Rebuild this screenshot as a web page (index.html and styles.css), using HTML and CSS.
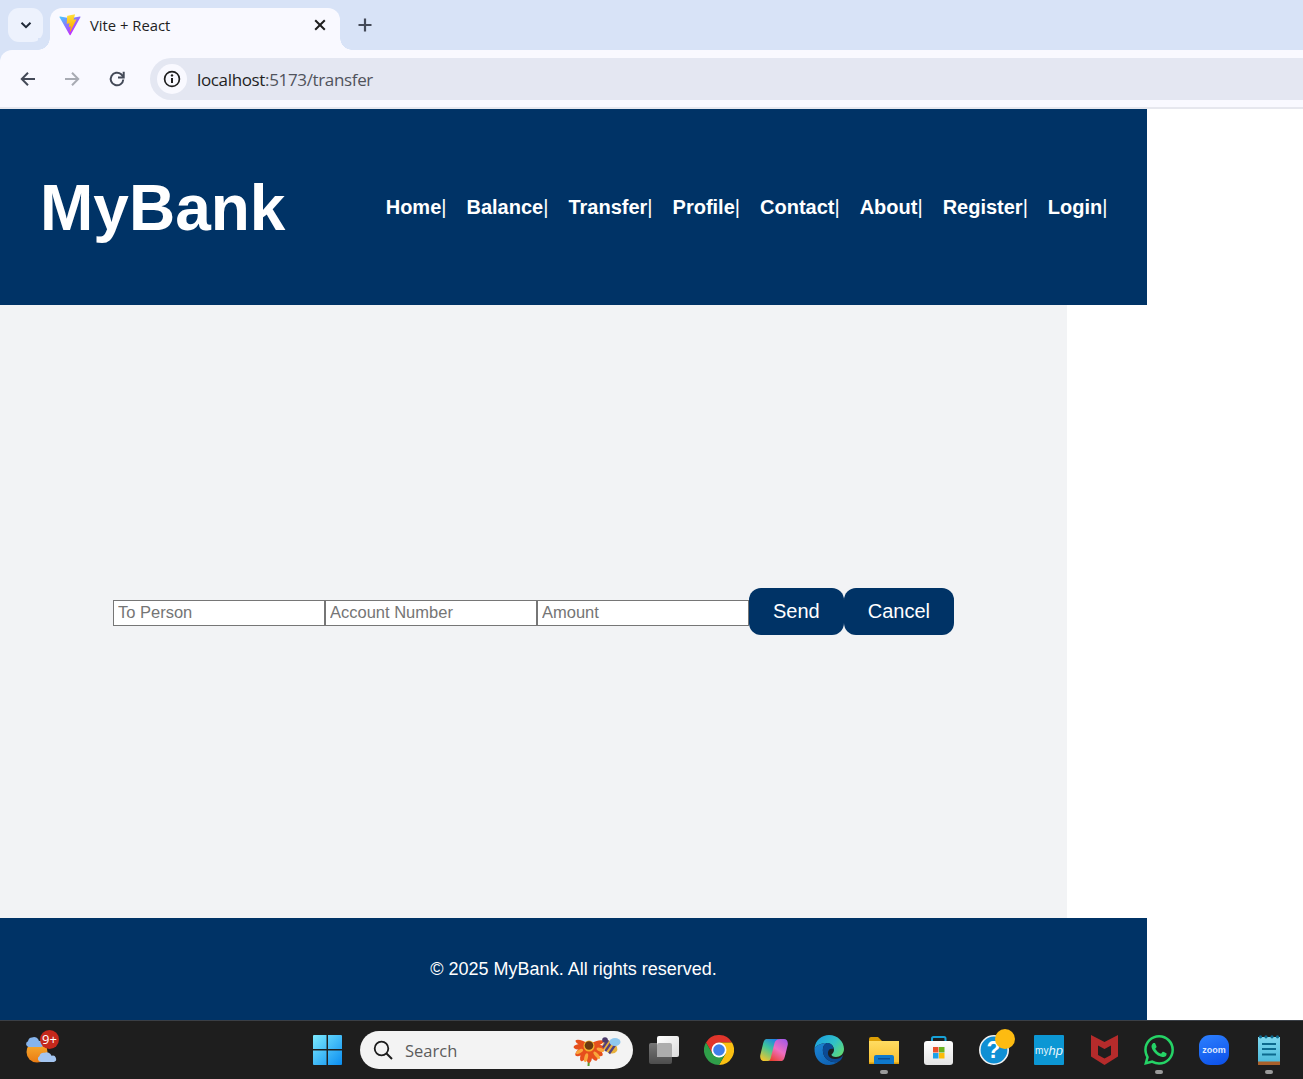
FILE: index.html
```html
<!DOCTYPE html>
<html lang="en">
<head>
<meta charset="utf-8">
<title>Vite + React</title>
<link rel="stylesheet" href="styles.css">
</head>
<body>
<div class="browser">
  <div class="tabstrip">
    <button class="tab-search" aria-label="Search tabs">
      <svg width="14" height="14" viewBox="0 0 14 14"><path d="M2.500 4.800 7 9.200l4.500-4.400" fill="none" stroke="#1f2937" stroke-width="2"/></svg>
    </button>
    <div class="tab">
      <svg class="favicon" width="22" height="22" viewBox="0 0 410 404">
        <defs>
          <linearGradient id="vg1" x1="6" y1="33" x2="235" y2="344" gradientUnits="userSpaceOnUse"><stop offset="0" stop-color="#41d1ff"/><stop offset="1" stop-color="#bd34fe"/></linearGradient>
          <linearGradient id="vg2" x1="194" y1="8" x2="236" y2="292" gradientUnits="userSpaceOnUse"><stop offset="0" stop-color="#ffea83"/><stop offset=".08" stop-color="#ffdd35"/><stop offset="1" stop-color="#ffa800"/></linearGradient>
        </defs>
        <path d="M399.641 59.525 215.643 388.545c-3.800 6.793-13.559 6.833-17.415.073L10.582 59.556c-4.200-7.366 2.100-16.288 10.447-14.795l184.195 32.923a10 10 0 0 0 3.550-.006l180.343-32.870c8.320-1.516 14.649 7.337 10.524 14.717Z" fill="url(#vg1)"/>
        <path d="M292.965 1.574 156.801 28.255a5 5 0 0 0-4.030 4.611l-8.376 141.464c-.197 3.332 2.863 5.918 6.115 5.168l37.910-8.749c3.547-.818 6.752 2.306 6.023 5.873l-11.263 55.153c-.758 3.712 2.727 6.886 6.352 5.785l23.415-7.114c3.630-1.102 7.118 2.081 6.350 5.796l-17.899 86.633c-1.120 5.419 6.088 8.374 9.094 3.728l2.008-3.103 110.954-221.428c1.858-3.707-1.346-7.935-5.418-7.150l-39.022 7.532c-3.667.707-6.787-2.708-5.752-6.296l25.469-88.291c1.036-3.594-2.095-7.012-5.766-6.293Z" fill="url(#vg2)"/>
      </svg>
      <span class="tab-title">Vite + React</span>
      <svg class="tab-close" width="12" height="12" viewBox="0 0 12 12"><path d="M1.200 1.200l9.600 9.600M10.800 1.200l-9.600 9.600" stroke="#1f1f1f" stroke-width="2"/></svg>
    </div>
    <svg class="new-tab" width="14" height="14" viewBox="0 0 14 14"><path d="M7 0.500v13M0.500 7h13" stroke="#444a58" stroke-width="2.200"/></svg>
  </div>
  <div class="toolbar">
    <svg class="nav-icon" width="18" height="18" viewBox="0 0 18 18"><path d="M16 9H3M9 2.800 2.800 9 9 15.200" fill="none" stroke="#444a58" stroke-width="2"/></svg>
    <svg class="nav-icon" width="18" height="18" viewBox="0 0 18 18"><path d="M2 9h13M9 2.800 15.200 9 9 15.200" fill="none" stroke="#a8abb3" stroke-width="2"/></svg>
    <svg class="nav-icon" width="18" height="18" viewBox="0 0 18 18"><path d="M15.300 9.500A6.300 6.300 0 1 1 13.200 4.300L15.200 6.500" fill="none" stroke="#444a58" stroke-width="2"/><path d="M15.700 1.800v5.700h-5.700" fill="none" stroke="#444a58" stroke-width="2"/></svg>
    <div class="omnibox">
      <span class="site-info">
        <svg width="18" height="18" viewBox="0 0 18 18"><circle cx="9" cy="9" r="7.400" fill="none" stroke="#1f1f1f" stroke-width="1.700"/><path d="M9 8v5" stroke="#1f1f1f" stroke-width="2"/><circle cx="9" cy="5.400" r="1.200" fill="#1f1f1f"/></svg>
      </span>
      <span class="url"><span class="url-host">localhost</span>:5173/transfer</span>
    </div>
  </div>
</div>

<header class="site-header">
  <h1 class="logo">MyBank</h1>
  <nav class="site-nav">
    <a class="nav-link" href="#">Home<span class="sep">|</span></a>
    <a class="nav-link" href="#">Balance<span class="sep">|</span></a>
    <a class="nav-link" href="#">Transfer<span class="sep">|</span></a>
    <a class="nav-link" href="#">Profile<span class="sep">|</span></a>
    <a class="nav-link" href="#">Contact<span class="sep">|</span></a>
    <a class="nav-link" href="#">About<span class="sep">|</span></a>
    <a class="nav-link" href="#">Register<span class="sep">|</span></a>
    <a class="nav-link" href="#">Login<span class="sep">|</span></a>
  </nav>
</header>

<main class="transfer">
  <form class="transfer-form">
    <input class="field" type="text" placeholder="To Person">
    <input class="field" type="text" placeholder="Account Number">
    <input class="field" type="text" placeholder="Amount">
    <button class="btn" type="button">Send</button>
    <button class="btn" type="button">Cancel</button>
  </form>
</main>

<footer class="site-footer">© 2025 MyBank. All rights reserved.</footer>

<div class="taskbar">
  <div class="widgets">
    <span class="weather">
      <svg width="34" height="34" viewBox="0 0 34 34">
        <defs><linearGradient id="sun" x1="0" y1="0" x2="0" y2="1"><stop offset="0" stop-color="#f9b233"/><stop offset="1" stop-color="#ea7b12"/></linearGradient></defs>
        <circle cx="12" cy="19" r="10.500" fill="url(#sun)"/>
        <path d="M4 14a3 3 0 0 1-1-5.800 4.500 4.500 0 0 1 4-3.700 5 5 0 0 1 7 3.500 3 3 0 0 1 2 6Z" fill="#86b4ec"/>
        <path d="M16 29a3.200 3.200 0 0 1-1.500-6 4.500 4.500 0 0 1 5-3.200 5 5 0 0 1 7 3 3.200 3.200 0 0 1 2.500 6.200Z" fill="#a4c5f0"/>
      </svg>
      <span class="badge">9+</span>
    </span>
  </div>
  <div class="slot">
    <svg width="29" height="30" viewBox="0 0 30 30" preserveAspectRatio="none">
      <defs><linearGradient id="wg" x1="0" y1="0" x2="1" y2="1"><stop offset="0" stop-color="#7ceaff"/><stop offset="1" stop-color="#0a8df0"/></linearGradient></defs>
      <path d="M0 1a1 1 0 0 1 1-1h13v14H0ZM15.500 0H29a1 1 0 0 1 1 1v13H15.500ZM0 15.500h14V30H1a1 1 0 0 1-1-1ZM15.500 15.500H30V29a1 1 0 0 1-1 1H15.500Z" fill="url(#wg)"/>
    </svg>
  </div>
  <div class="task-search">
    <svg width="20" height="20" viewBox="0 0 20 20"><circle cx="8.500" cy="8.500" r="6.800" fill="none" stroke="#1c1c1c" stroke-width="1.800"/><path d="M13.500 13.500 19 19" stroke="#1c1c1c" stroke-width="2"/></svg>
    <span class="task-search-text">Search</span>
    <svg class="search-art" width="48" height="34" viewBox="0 0 48 34">
      <path d="M16 24 15.500 33" stroke="#5b9a2e" stroke-width="2"/>
      <g fill="#e64f1c">
        <ellipse cx="16" cy="21" rx="3.500" ry="9"/>
        <ellipse cx="16" cy="21" rx="3.500" ry="9" transform="rotate(28 16 13)"/>
        <ellipse cx="16" cy="21" rx="3.500" ry="8.500" transform="rotate(-28 16 13)"/>
        <ellipse cx="16" cy="21" rx="3.500" ry="8.500" transform="rotate(55 16 13)"/>
        <ellipse cx="16" cy="21" rx="3.500" ry="8.500" transform="rotate(-55 16 13)"/>
        <ellipse cx="16" cy="21" rx="3" ry="7.500" transform="rotate(85 16 13)"/>
        <ellipse cx="16" cy="21" rx="3" ry="8.500" transform="rotate(-82 16 13)"/>
        <ellipse cx="16" cy="21" rx="2.500" ry="6.500" transform="rotate(112 16 13)"/>
        <ellipse cx="16" cy="21" rx="2.500" ry="7.500" transform="rotate(-108 16 13)"/>
      </g>
      <g fill="#f9a63c">
        <ellipse cx="16" cy="25" rx="1.800" ry="4.500" transform="rotate(14 16 13)"/>
        <ellipse cx="16" cy="25" rx="1.800" ry="4.500" transform="rotate(-40 16 13)"/>
        <ellipse cx="16" cy="25" rx="1.800" ry="4" transform="rotate(-72 16 13)"/>
        <ellipse cx="16" cy="24" rx="1.800" ry="4" transform="rotate(60 16 13)"/>
      </g>
      <circle cx="16" cy="13" r="5.500" fill="#f4b22f"/>
      <circle cx="16" cy="12.500" r="4.300" fill="#6a3a12"/>
      <g transform="rotate(35 37 14)">
        <ellipse cx="37" cy="14" rx="8" ry="5.800" fill="#e8b13c"/>
        <path d="M31.500 9.500v9M35.500 8v12M40 8.200v11.600" stroke="#54407e" stroke-width="2.300"/>
      </g>
      <ellipse cx="42" cy="9" rx="5.500" ry="4" fill="#8fc8ee"/>
      <circle cx="32" cy="7" r="2.800" fill="#4b3a6a"/>
    </svg>
  </div>
  <div class="slot slot-first">
    <svg width="31" height="28" viewBox="0 0 31 28">
      <defs>
        <linearGradient id="tv1" x1="0" y1="0" x2="0" y2="1"><stop offset="0" stop-color="#777"/><stop offset="1" stop-color="#4d4d4d"/></linearGradient>
        <linearGradient id="tv2" x1="0" y1="0" x2="1" y2="1"><stop offset="0" stop-color="#fff"/><stop offset="1" stop-color="#dcdcdc"/></linearGradient>
      </defs>
      <rect x="0" y="7" width="23" height="21" rx="2" fill="url(#tv1)"/>
      <rect x="8" y="0" width="22" height="21" rx="2" fill="url(#tv2)"/>
      <path d="M8 9a2 2 0 0 1 2-2h11a2 2 0 0 1 2 2v12H8Z" fill="#adadad"/>
    </svg>
  </div>
  <div class="slot">
    <svg width="30" height="30" viewBox="0 0 30 30">
      <path d="M2 7.500A15 15 0 0 1 28 7.500L15 7.500 8.500 18.750Z" fill="#e0352b"/>
      <path d="M28 7.500A15 15 0 0 1 15 30L21.500 18.750 15 7.500Z" fill="#fbc012"/>
      <path d="M15 30A15 15 0 0 1 2 7.500L8.500 18.750H21.500Z" fill="#2f9e49"/>
      <circle cx="15" cy="15" r="7.500" fill="#fff"/>
      <circle cx="15" cy="15" r="5.800" fill="#3f7fea"/>
    </svg>
  </div>
  <div class="slot">
    <svg width="28" height="24" viewBox="0 0 28 24">
      <defs>
        <linearGradient id="cp1" x1=".75" y1="0" x2=".2" y2="1"><stop offset="0" stop-color="#1f7fe8"/><stop offset=".45" stop-color="#3fc69a"/><stop offset="1" stop-color="#f4c52a"/></linearGradient>
        <linearGradient id="cp2" x1=".2" y1="1" x2=".8" y2="0"><stop offset="0" stop-color="#a65ae6"/><stop offset=".5" stop-color="#ef6fc0"/><stop offset="1" stop-color="#e8402f"/></linearGradient>
      </defs>
      <path d="M7 1H20C18 1 17.500 3 17 5L13.500 19C13 21 11 23 8 23H4C1 23-.3 20 .3 17L3 6C4 2 5 1 7 1Z" fill="url(#cp1)"/>
      <path d="M7 1H20C18 1 17.500 3 17 5L13.500 19C13 21 11 23 8 23H4C1 23-.3 20 .3 17L3 6C4 2 5 1 7 1Z" fill="url(#cp2)" transform="rotate(180 14 12)"/>
    </svg>
  </div>
  <div class="slot">
    <svg width="30" height="30" viewBox="0 0 30 30">
      <defs>
        <linearGradient id="ed1" x1="0" y1=".2" x2="1" y2=".8"><stop offset="0" stop-color="#1b9fe0"/><stop offset=".55" stop-color="#30c0c8"/><stop offset="1" stop-color="#62da72"/></linearGradient>
        <linearGradient id="ed2" x1="0" y1="0" x2=".7" y2="1"><stop offset="0" stop-color="#1c86d4"/><stop offset="1" stop-color="#0f62b4"/></linearGradient>
      </defs>
      <path d="M.5 13C1.500 5 8 0 15 0C24 0 30 7 30 14C30 19 26 22 22 22C19 22 17.500 21 17.500 19.500C18.500 18.500 20 17.500 20 15C20 11 17 8 13 8C8 8 3 10 .5 13Z" fill="url(#ed1)"/>
      <path d="M.5 13C3 10 8 8 13 8C10 9 8.500 12 9 17C10 24 16 28 24 27C21 29 18 30 15 30C6 30 0 23 .5 13Z" fill="url(#ed2)"/>
      <path d="M13 8C10 9 8.500 12 9 17C10 24 16 28 24 27C26.500 26 28 24 29 20C27 23 24 24 21 24C16 24 13.500 21 14 17C14.500 14 17 13 19.500 14C19 10 16.500 8 13 8Z" fill="#0b4a94"/>
    </svg>
  </div>
  <div class="slot">
    <svg width="30" height="27" viewBox="0 0 30 27">
      <defs><linearGradient id="fd" x1="0" y1="0" x2="0" y2="1"><stop offset="0" stop-color="#ffdc62"/><stop offset="1" stop-color="#f8bf2e"/></linearGradient></defs>
      <path d="M0 2a2 2 0 0 1 2-2h7l4 4H0Z" fill="#dc9e05"/>
      <path d="M0 4h30v23H0Z" fill="url(#fd)"/>
      <rect x="0" y="25.500" width="30" height="1.500" fill="#d99b08"/>
      <path d="M5 20a2 2 0 0 1 2-2h16a2 2 0 0 1 2 2v7H5Z" fill="#0f79cc"/>
      <rect x="9" y="21" width="12" height="1.500" fill="#0a4f96"/>
    </svg>
    <span class="running"></span>
  </div>
  <div class="slot">
    <svg width="30" height="29" viewBox="0 0 30 29">
      <defs><linearGradient id="st" x1="0" y1="0" x2="0" y2="1"><stop offset="0" stop-color="#fff"/><stop offset="1" stop-color="#e4e4e4"/></linearGradient></defs>
      <path d="M8 6V2.500A1.500 1.500 0 0 1 9.500 1H20a1.500 1.500 0 0 1 1.500 1.500V6" fill="none" stroke="#17a2d8" stroke-width="2"/>
      <rect x="0" y="5" width="29" height="24" rx="3" fill="url(#st)"/>
      <rect x="9" y="11" width="5.500" height="5.500" fill="#e8512c"/>
      <rect x="15" y="11" width="5.500" height="5.500" fill="#69b21f"/>
      <rect x="9" y="17" width="5.500" height="5.500" fill="#1aa0e8"/>
      <rect x="15" y="17" width="5.500" height="5.500" fill="#fbbc09"/>
    </svg>
  </div>
  <div class="slot">
    <svg class="help" width="30" height="30" viewBox="0 0 30 30">
      <circle cx="15" cy="15" r="14.200" fill="#0f8fd4" stroke="#f2f2f2" stroke-width="1.600"/>
      <text class="help-mark" x="14.500" y="23">?</text>
      <circle cx="26" cy="4" r="10" fill="#fdbb11"/>
    </svg>
  </div>
  <div class="slot">
    <span class="myhp"><span class="myhp-my">my</span><span class="myhp-hp">hp</span></span>
  </div>
  <div class="slot">
    <svg width="27" height="30" viewBox="0 0 27 30"><path d="M0 0 13.500 7 27 0V21.500L13.500 30 0 21.500Z" fill="#b52b2b"/><path d="M7 10.500 13.500 14 20 10.500V20L13.500 23.500 7 20Z" fill="#1e1e1e"/></svg>
  </div>
  <div class="slot">
    <svg width="30" height="30" viewBox="0 0 24 24"><path d="M17.472 14.382c-.297-.149-1.758-.867-2.030-.967-.273-.099-.471-.148-.670.150-.197.297-.767.966-.940 1.164-.173.199-.347.223-.644.075-.297-.150-1.255-.463-2.390-1.475-.883-.788-1.480-1.761-1.653-2.059-.173-.297-.018-.458.130-.606.134-.133.298-.347.446-.520.149-.174.198-.298.298-.497.099-.198.050-.371-.025-.520-.075-.149-.669-1.612-.916-2.207-.242-.579-.487-.500-.669-.510-.173-.008-.371-.010-.570-.010-.198 0-.520.074-.792.372-.272.297-1.040 1.016-1.040 2.479 0 1.462 1.065 2.875 1.213 3.074.149.198 2.096 3.200 5.077 4.487.709.306 1.262.489 1.694.625.712.227 1.360.195 1.871.118.571-.085 1.758-.719 2.006-1.413.248-.694.248-1.289.173-1.413-.074-.124-.272-.198-.570-.347m-5.421 7.403h-.004a9.870 9.870 0 01-5.031-1.378l-.361-.214-3.741.982.998-3.648-.235-.374a9.860 9.860 0 01-1.510-5.260c.001-5.450 4.436-9.884 9.888-9.884 2.640 0 5.122 1.030 6.988 2.898a9.825 9.825 0 012.893 6.994c-.003 5.450-4.437 9.884-9.885 9.884m8.413-18.297A11.815 11.815 0 0012.050 0C5.495 0 .160 5.335.157 11.892c0 2.096.547 4.142 1.588 5.945L.057 24l6.305-1.654a11.882 11.882 0 005.683 1.448h.005c6.554 0 11.890-5.335 11.893-11.893a11.821 11.821 0 00-3.480-8.413z" fill="#25d366"/></svg>
    <span class="running"></span>
  </div>
  <div class="slot">
    <span class="zoom">zoom</span>
  </div>
  <div class="slot">
    <svg width="22" height="30" viewBox="0 0 22 30">
      <defs><linearGradient id="np" x1="0" y1="0" x2="0" y2="1"><stop offset="0" stop-color="#7ed8ef"/><stop offset="1" stop-color="#4dbbdc"/></linearGradient></defs>
      <rect x="0" y="2" width="22" height="25" fill="url(#np)"/>
      <g fill="#0e6a8e"><circle cx="2.500" cy="1.800" r="1.600"/><circle cx="8" cy="1.800" r="1.600"/><circle cx="14" cy="1.800" r="1.600"/><circle cx="19.500" cy="1.800" r="1.600"/></g>
      <path d="M4 9h14M4 14h14M4 19.500h14" stroke="#0d6a8e" stroke-width="2.200"/>
      <rect x="0" y="26.500" width="22" height="3.500" fill="#a9602a"/>
    </svg>
    <span class="running"></span>
  </div>
</div>
</body>
</html>
```

FILE: styles.css
```css
* { box-sizing: border-box; }

html, body { margin: 0; padding: 0; }

body {
  width: 1303px;
  height: 1079px;
  overflow: hidden;
  display: flex;
  flex-direction: column;
  background: #fff;
  font-family: "Liberation Sans", Arial, sans-serif;
}

/* browser chrome */
.browser {
  height: 109px;
  flex: none;
  display: flex;
  flex-direction: column;
  background: #d8e3f7;
  font-family: "Open Sans", "Noto Sans", sans-serif;
}

.tabstrip {
  height: 50px;
  flex: none;
  display: flex;
  align-items: flex-start;
  padding: 8px 0 0 8px;
}

.tab-search {
  width: 35px;
  height: 34px;
  margin-right: 7px;
  padding: 0;
  border: 0;
  border-radius: 11px;
  background: #edf2fd;
  display: flex;
  align-items: center;
  justify-content: center;
}

.tab {
  position: relative;
  width: 290px;
  height: 42px;
  background: #f9f9ff;
  border-radius: 12px 12px 0 0;
  display: flex;
  align-items: center;
  padding: 0 14px 8px 9px;
}

.tab::before,
.tab::after {
  content: "";
  position: absolute;
  bottom: 0;
  width: 12px;
  height: 12px;
}

.tab::before {
  left: -12px;
  background: radial-gradient(circle at 0 0, #d8e3f7 11.500px, #f9f9ff 12px);
}

.tab::after {
  right: -12px;
  background: radial-gradient(circle at 100% 0, #d8e3f7 11.500px, #f9f9ff 12px);
}

.favicon { flex: none; }

.tab-title {
  flex: 1;
  margin-left: 9px;
  font-size: 14.800px;
  color: #1f1f1f;
}

.tab-close { flex: none; }

.new-tab {
  margin: 10px 0 0 18px;
}

.toolbar {
  height: 59px;
  flex: none;
  display: flex;
  align-items: center;
  gap: 26.500px;
  padding: 1px 0 0 18.500px;
  background: #f9f9ff;
  border-top-left-radius: 12px;
  border-bottom: 2px solid #e6e7ee;
}

.nav-icon { flex: none; }

.omnibox {
  height: 42px;
  flex: 1;
  margin-left: -2px;
  display: flex;
  align-items: center;
  padding-left: 7px;
  background: #e4e7f2;
  border-radius: 21px 0 0 21px;
}

.site-info {
  width: 30px;
  height: 30px;
  border-radius: 50%;
  background: #f9f9ff;
  display: flex;
  align-items: center;
  justify-content: center;
}

.url {
  margin-left: 10px;
  font-size: 17px;
  color: #50535c;
  letter-spacing: -0.350px;
}

.url-host { color: #1f1f1f; }

/* site */
.site-header {
  width: 1147px;
  height: 196px;
  flex: none;
  display: flex;
  align-items: center;
  justify-content: space-between;
  padding: 0 39.500px 0 40px;
  background: #003366;
  color: #fff;
}

.logo {
  margin: 2px 0 0;
  font-size: 64px;
  font-weight: 700;
  line-height: 1;
}

.site-nav {
  display: flex;
  gap: 20px;
}

.nav-link {
  color: #fff;
  font-size: 20px;
  font-weight: 700;
  text-decoration: none;
}

.sep { font-weight: 400; }

.transfer {
  width: 1067px;
  height: 613px;
  flex: none;
  display: flex;
  align-items: center;
  justify-content: center;
  background: #f2f3f5;
}

.transfer-form {
  display: flex;
  align-items: flex-start;
}

.field {
  width: 212px;
  height: 26px;
  margin-top: 12px;
  padding: 0 4px 2px;
  border: 1px solid #767676;
  border-radius: 0;
  background: #fff;
  font-family: "Liberation Sans", Arial, sans-serif;
  font-size: 16.500px;
}

.field::placeholder { color: #757575; opacity: 1; }

.btn {
  height: 47px;
  padding: 0 24px;
  border: 0;
  border-radius: 12px;
  background: #003366;
  color: #fff;
  font-family: "Liberation Sans", Arial, sans-serif;
  font-size: 20px;
}

.site-footer {
  width: 1147px;
  height: 102px;
  flex: none;
  display: flex;
  align-items: center;
  justify-content: center;
  background: #003366;
  color: #fff;
  font-size: 18px;
}

/* taskbar */
.taskbar {
  height: 59px;
  flex: none;
  display: flex;
  align-items: center;
  background: #1e1e1e;
  border-top: 1px solid #3a3f46;
  font-family: "Open Sans", "Noto Sans", sans-serif;
}

.widgets {
  width: 300px;
  flex: none;
  padding-left: 25px;
  display: flex;
  align-items: center;
}

.weather {
  position: relative;
  width: 34px;
  height: 34px;
  display: block;
}

.badge {
  position: absolute;
  left: 15px;
  top: -3px;
  width: 19px;
  height: 19px;
  border-radius: 50%;
  background: #c4281c;
  color: #fff;
  font-size: 13px;
  line-height: 19px;
  text-align: center;
}

.slot {
  position: relative;
  width: 55px;
  height: 58px;
  flex: none;
  display: flex;
  align-items: center;
  justify-content: center;
}

.slot-first { margin-left: 3.500px; }

.running {
  position: absolute;
  left: 23.500px;
  bottom: 5px;
  width: 8px;
  height: 4px;
  border-radius: 2px;
  background: #9a9a9a;
}

.task-search {
  width: 273px;
  height: 38px;
  flex: none;
  margin-left: 5px;
  display: flex;
  align-items: center;
  padding: 0 12px 0 13px;
  border-radius: 19px;
  background: #f3f3f3;
}

.task-search-text {
  flex: 1;
  margin-left: 12px;
  font-size: 16.500px;
  color: #5c5c5c;
}

.search-art { flex: none; }

.help { overflow: visible; }

.help-mark {
  fill: #fff;
  font-family: "Liberation Sans", Arial, sans-serif;
  font-size: 23px;
  font-weight: 700;
  text-anchor: middle;
}

.myhp {
  width: 30px;
  height: 30px;
  border-radius: 1px;
  background: #0c97d4;
  color: #e8f6fc;
  display: flex;
  align-items: center;
  justify-content: center;
  font-family: "Liberation Sans", Arial, sans-serif;
  font-size: 10px;
}

.myhp-hp { font-style: italic; font-size: 13px; }

.zoom {
  width: 30px;
  height: 30px;
  border-radius: 11px;
  background: linear-gradient(160deg, #2d80ff, #0b4fe8);
  color: #dfe9ff;
  display: flex;
  align-items: center;
  justify-content: center;
  font-family: "Liberation Sans", Arial, sans-serif;
  font-size: 9px;
  font-weight: 700;
}
```
